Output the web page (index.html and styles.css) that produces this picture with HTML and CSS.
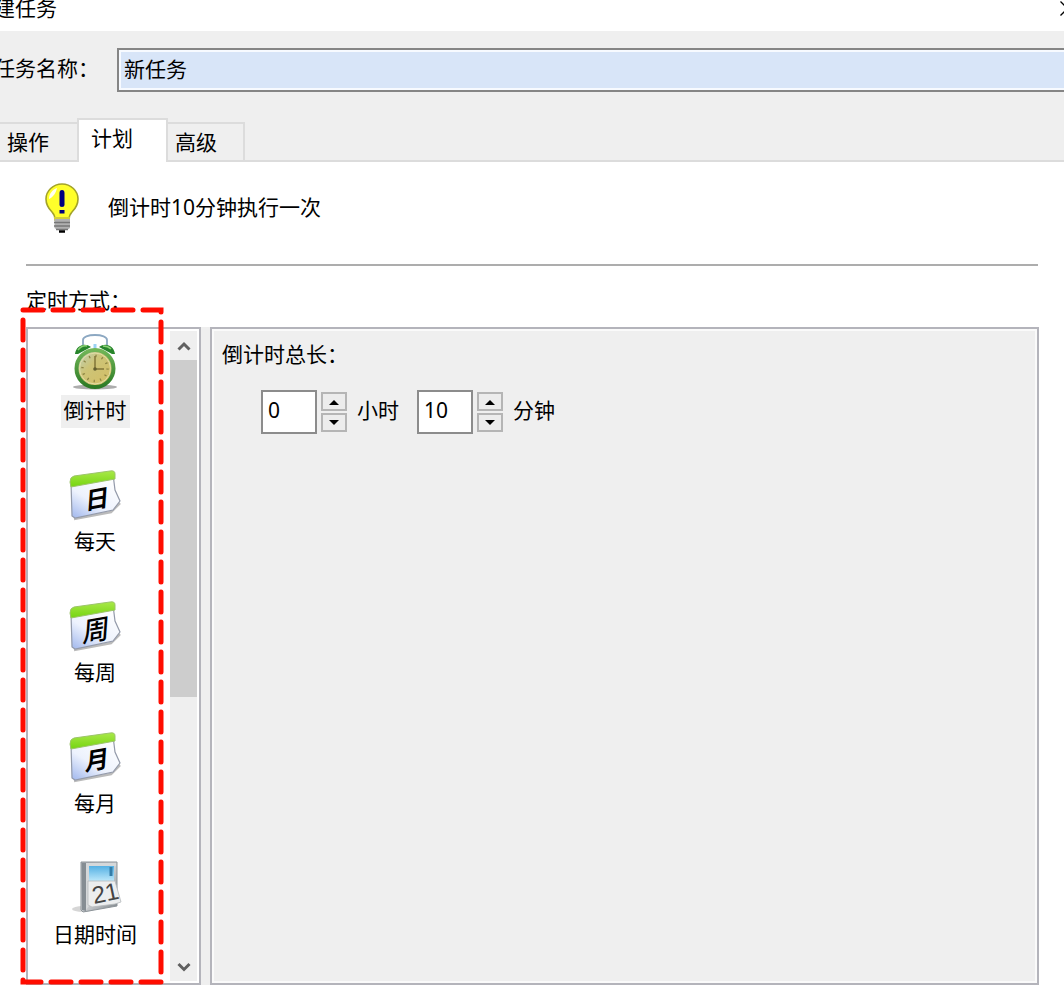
FILE: index.html
```html
<!DOCTYPE html>
<html lang="zh-CN">
<head>
<meta charset="utf-8">
<meta name="viewport" content="width=device-width, initial-scale=1">
<title>新建任务</title>
<link rel="stylesheet" href="styles.css">
</head>
<body>
<div class="window">
  <header class="titlebar">
    <h1 class="title">建任务</h1>
    <button class="close" type="button" aria-label="关闭">
      <svg width="15" height="15" viewBox="0 0 15 15"><path d="M.5 .5l14 14M14.500 .5l-14 14" stroke="#000" stroke-width="1.300"/></svg>
    </button>
  </header>

  <div class="top">
    <div class="name-row">
      <label class="name-label" for="task-name">任务名称：</label>
      <input class="name-input" id="task-name" type="text" value="新任务">
    </div>
    <div class="tabs" role="tablist">
      <button class="tab tab-first" type="button" role="tab" aria-selected="false">操作</button>
      <button class="tab tab-active" type="button" role="tab" aria-selected="true">计划</button>
      <button class="tab" type="button" role="tab" aria-selected="false">高级</button>
    </div>
  </div>

  <main class="page">
    <div class="hint">
      <svg class="bulb" width="36" height="52" viewBox="0 0 36 52" aria-hidden="true">
        <path d="M18 2C9 2 2 9 2 17c0 6 3 10 6 13 2 2 3 4 3 8h14c0-4 1-6 3-8 3-3 6-7 6-13C34 9 27 2 18 2z" fill="#ffff2a" stroke="#a3a329" stroke-width="1.600"/>
        <path d="M10 35h16v3H10z" fill="#d2cf3a"/>
        <path d="M5 17c0-5 3-9 8-11-1 5-4 9-8 11z" fill="#fffff0"/>
        <path d="M15.500 11q0-3 2.500-3t2.500 3v12q0 2-2.500 2t-2.500-2zM15.500 28h5v3.500h-5z" fill="#00007f"/>
        <path d="M10.500 37h15.500v9l-3 2H13.500l-3-2z" fill="#b0b0b0"/>
        <path d="M10 40.500h16M10 44h16M12 47.500h12" stroke="#777" stroke-width="1.500"/>
        <path d="M15 49.500h6" stroke="#000" stroke-width="2.500"/>
      </svg>
      <p class="hint-text">倒计时10分钟执行一次</p>
    </div>
    <hr class="rule">
    <h2 class="section-title">定时方式：</h2>

    <div class="columns">
      <div class="mode-box">
        <ul class="modes">
          <li><button class="mode" type="button" aria-pressed="true">
            <svg class="icon" width="54" height="60" viewBox="0 0 54 60" aria-hidden="true">
              <defs>
                <linearGradient id="face" x1="0" y1="0" x2="1" y2="1"><stop offset="0" stop-color="#b9d3c7"/><stop offset=".4" stop-color="#cdc477"/><stop offset="1" stop-color="#d5bd62"/></linearGradient>
                <linearGradient id="rim" x1="0" y1="0" x2="0" y2="1"><stop offset="0" stop-color="#71b657"/><stop offset="1" stop-color="#2c7a25"/></linearGradient>
              </defs>
              <ellipse cx="27" cy="56" rx="22" ry="2.500" fill="#777" opacity=".6"/>
              <path d="M15 14V9c0-3 5-5 12-5s12 2 12 5v5" fill="none" stroke="#8ca8c2" stroke-width="1.800"/>
              <path d="M27 13v6" stroke="#9bd3f4" stroke-width="3"/>
              <path d="M7 23c1-8 9-12 16-7L10 23zM47 23c-1-8-9-12-16-7l13 7z" fill="#28852c"/>
              <path d="M10 19q4-5 9-4M35 15q5 0 8 3" stroke="#8bd176" stroke-width="1.500" fill="none"/>
              <circle cx="27" cy="37.500" r="18.500" fill="url(#face)" stroke="url(#rim)" stroke-width="4"/>
              <circle cx="27" cy="37.500" r="15.500" fill="none" stroke="#e2dda6" stroke-width="1"/>
              <circle cx="27" cy="37.500" r="12.500" fill="none" stroke="#8e8543" stroke-width="2.500" stroke-dasharray="1.300 5.245"/>
              <path d="M27 25v13h9" fill="none" stroke="#817538" stroke-width="1.500"/><circle cx="27" cy="38" r="1.800" fill="#65602f"/>
            </svg>
            <span class="mode-label mode-label-on">倒计时</span></button></li>
          <li><button class="mode" type="button">
            <svg class="icon" width="54" height="60" viewBox="0 0 54 60" aria-hidden="true">
              <defs>
                <linearGradient id="paper" x1="0" y1="1" x2=".7" y2="0"><stop offset="0" stop-color="#9fb6ed"/><stop offset=".45" stop-color="#edf2fd"/><stop offset="1" stop-color="#fff"/></linearGradient>
                <linearGradient id="green" x1="0" y1="0" x2="0" y2="1"><stop offset="0" stop-color="#a9e849"/><stop offset="1" stop-color="#75d510"/></linearGradient>
                <g id="calendar">
                  <path d="M6 57L43 50 52 41" fill="none" stroke="#bbb" stroke-width="2.500"/>
                  <path d="M3 20L45 12 47 28 52 39 45 48 7 56 4 54z" fill="url(#paper)" stroke="#939aaa" stroke-width="1.200"/>
                  <path d="M2 20q0-5 4-6l36-5q5-1 5 3v5L3 25z" fill="url(#green)" stroke="#9cc46a"/>
                </g>
              </defs>
              <use href="#calendar"/>
              <text class="glyph" x="15" y="46" transform="rotate(-10 27 36)">日</text>
            </svg>
            <span class="mode-label">每天</span></button></li>
          <li><button class="mode" type="button">
            <svg class="icon" width="54" height="60" viewBox="0 0 54 60" aria-hidden="true">
              <use href="#calendar"/>
              <text class="glyph glyph-week" x="12" y="47" transform="rotate(-10 27 36)">周</text>
            </svg>
            <span class="mode-label">每周</span></button></li>
          <li><button class="mode" type="button">
            <svg class="icon" width="54" height="60" viewBox="0 0 54 60" aria-hidden="true">
              <use href="#calendar"/>
              <text class="glyph" x="15" y="45" transform="rotate(-10 27 36)">月</text>
            </svg>
            <span class="mode-label">每月</span></button></li>
          <li><button class="mode mode-last" type="button">
            <svg class="icon" width="54" height="60" viewBox="0 0 54 60" aria-hidden="true">
              <defs>
                <linearGradient id="sky" x1="0" y1="0" x2="0" y2="1"><stop offset="0" stop-color="#54b0e3"/><stop offset="1" stop-color="#c3ebfc"/></linearGradient>
                <linearGradient id="steel" x1="0" y1="0" x2="1" y2="1"><stop offset="0" stop-color="#a6abb0"/><stop offset=".5" stop-color="#cdd0d3"/><stop offset="1" stop-color="#7d8489"/></linearGradient>
              </defs>
              <ellipse cx="15" cy="54" rx="11" ry="3" fill="#bbb" opacity=".6"/>
              <path d="M13 7h36v44l-34 6-2-2z" fill="url(#steel)" stroke="#8d9499"/>
              <path d="M14 8h4v48l-4-1z" fill="#858d93"/>
              <path d="M18 8h30v3H21v40l-3 4z" fill="#d5d8da"/>
              <path d="M21 11h25v16H21z" fill="url(#sky)"/>
              <path d="M43 12v9" stroke="#347da8" stroke-width="3"/>
              <path d="M20 26h27l6 21-6 2-23 3-4-2z" fill="#eceeef" stroke="#b6babd" stroke-width=".8"/>
              <text class="glyph-date" x="24" y="47" transform="rotate(-12 35 39)">21</text>
            </svg>
            <span class="mode-label">日期时间</span></button></li>
        </ul>
        <div class="scrollbar">
          <button class="scroll-btn" type="button" aria-label="向上滚动"><svg width="14" height="12" viewBox="0 0 14 12"><path d="M1.500 9.500L7 4l5.500 5.500" fill="none" stroke="#606060" stroke-width="3"/></svg></button>
          <div class="scroll-track"><div class="scroll-thumb"></div></div>
          <button class="scroll-btn" type="button" aria-label="向下滚动"><svg width="14" height="12" viewBox="0 0 14 12"><path d="M1.500 3L7 8.500 12.500 3" fill="none" stroke="#606060" stroke-width="3"/></svg></button>
        </div>
        <svg class="callout" aria-hidden="true"><rect width="100%" height="100%"/></svg>
      </div>

      <section class="panel">
        <h3 class="panel-title">倒计时总长：</h3>
        <div class="duration">
          <input class="num" id="hours" type="text" value="0">
          <div class="spin">
            <button class="spin-btn" type="button" aria-label="增加小时"><svg width="10" height="6" viewBox="0 0 10 6"><path d="M0 6l5-5 5 5z"/></svg></button>
            <button class="spin-btn" type="button" aria-label="减少小时"><svg width="10" height="6" viewBox="0 0 10 6"><path d="M0 0l5 5 5-5z"/></svg></button>
          </div>
          <label class="unit" for="hours">小时</label>
          <input class="num" id="minutes" type="text" value="10">
          <div class="spin">
            <button class="spin-btn" type="button" aria-label="增加分钟"><svg width="10" height="6" viewBox="0 0 10 6"><path d="M0 6l5-5 5 5z"/></svg></button>
            <button class="spin-btn" type="button" aria-label="减少分钟"><svg width="10" height="6" viewBox="0 0 10 6"><path d="M0 0l5 5 5-5z"/></svg></button>
          </div>
          <label class="unit" for="minutes">分钟</label>
        </div>
      </section>
    </div>
  </main>
</div>
</body>
</html>
```
FILE: styles.css
```css
* { box-sizing: border-box; }

body {
  margin: 0;
  background: #fff;
  color: #000;
  font: 21px/30px "Noto Sans", "Noto Sans CJK SC", sans-serif;
}

h1, h2, h3, p, ul { margin: 0; padding: 0; font: inherit; }
ul { list-style: none; }

button, input {
  font: inherit;
  color: inherit;
  border: 0;
  border-radius: 0;
  padding: 0;
  margin: 0;
}

.window {
  min-height: 100vh;
  display: flex;
  flex-direction: column;
  overflow: hidden;
}

/* Title bar */
.titlebar {
  height: 31px;
  display: flex;
  justify-content: space-between;
  align-items: flex-start;
}
.title { margin: -7px 0 0 -6px; }
.close {
  margin-right: -11px;
  padding-top: 1px;
  background: none;
  line-height: 0;
  flex: none;
}

/* Name field and tabs */
.top {
  background: #efefef;
  padding-top: 17px;
}
.name-row {
  display: flex;
  align-items: center;
  margin-right: -8px;
}
.name-label {
  width: 123px;
  margin-left: -6px;
  padding-bottom: 4px;
  flex: none;
}
.name-input {
  flex: 1;
  min-width: 0;
  height: 44px;
  padding: 0 5px 4px;
  border: 2px solid #858585;
  background: #d8e5f8;
  box-shadow: inset 0 0 0 2px #f7faff;
}
.tabs {
  display: flex;
  align-items: flex-end;
  margin-top: 26px;
  box-shadow: inset 0 -2px #dcdcdc;
}
.tab {
  height: 40px;
  padding: 0 26px 0 7px;
  border: 2px solid #dcdcdc;
  border-left: 0;
  background: #efefef;
}
.tab-first { padding-right: 28px; border-right: 0; }
.tab-active {
  height: 44px;
  padding: 0 33px 6px 12px;
  border: 2px solid #dcdcdc;
  border-bottom: 0;
  background: #fff;
}

/* Plan page */
.page {
  flex: 1;
  display: flex;
  flex-direction: column;
  padding: 20px 26px 17px;
}
.hint {
  display: flex;
  align-items: center;
  gap: 28px;
  padding-left: 18px;
}
.bulb { flex: none; }
.hint-text { padding-bottom: 3px; }
.rule {
  width: 100%;
  height: 2px;
  margin: 30px 0 19px;
  border: 0;
  background: #adadad;
}
.section-title { margin-bottom: 12px; }

.columns {
  flex: 1;
  display: flex;
  gap: 9px;
  background: #efefef;
}

/* Mode list */
.mode-box {
  position: relative;
  display: flex;
  width: 175px;
  flex: none;
  padding: 2px;
  border: 2px solid #b4b4bb;
  background: #fff;
}
.modes { flex: 1; padding-right: 10px; }
.mode {
  display: flex;
  flex-direction: column;
  align-items: center;
  width: 100%;
  height: 131px;
  background: none;
}
.mode-last { height: 97px; }
.icon { margin-bottom: 4px; flex: none; }
.mode-label { padding: 0 3px 3px; }
.mode-label-on { background: #efefef; }

.glyph {
  font: italic bold 24px "Noto Sans CJK SC", sans-serif;
}
.glyph-week { font-size: 27px; font-weight: 500; }
.glyph-date {
  font: 24px "Liberation Sans", sans-serif;
  fill: #444;
}

.scrollbar {
  width: 27px;
  display: flex;
  flex-direction: column;
  background: #efefef;
}
.scroll-btn {
  height: 29px;
  background: none;
  line-height: 0;
}
.scroll-track { flex: 1; }
.scroll-thumb { height: 57%; background: #cdcdcd; }

/* Dashed frame drawn over the mode list */
.callout {
  position: absolute;
  left: -5px;
  top: -19px;
  width: 138px;
  height: calc(100% + 18px);
  overflow: visible;
  pointer-events: none;
}
.callout rect {
  fill: none;
  stroke: #ff0c00;
  stroke-width: 5px;
  stroke-dasharray: 20 10;
  stroke-linecap: round;
}

/* Settings panel */
.panel {
  flex: 1;
  margin-right: -1px;
  padding: 10px;
  border: 2px solid #b4b4bb;
  box-shadow: inset 0 0 0 2px #fafafa;
}
.duration {
  display: flex;
  align-items: center;
  margin: 21px 0 0 39px;
}
.num {
  width: 56px;
  height: 44px;
  padding: 0 5px 4px;
  border: 2px solid #8c8c8c;
  background: #fff;
}
.spin {
  display: flex;
  flex-direction: column;
  gap: 2px;
  margin: 0 10px 0 4px;
}
.spin-btn {
  width: 26px;
  height: 19px;
  display: flex;
  align-items: center;
  justify-content: center;
  border: 2px solid #b5b5b5;
  background: #ececec;
}
.unit { margin-right: 18px; padding-bottom: 4px; }
```
